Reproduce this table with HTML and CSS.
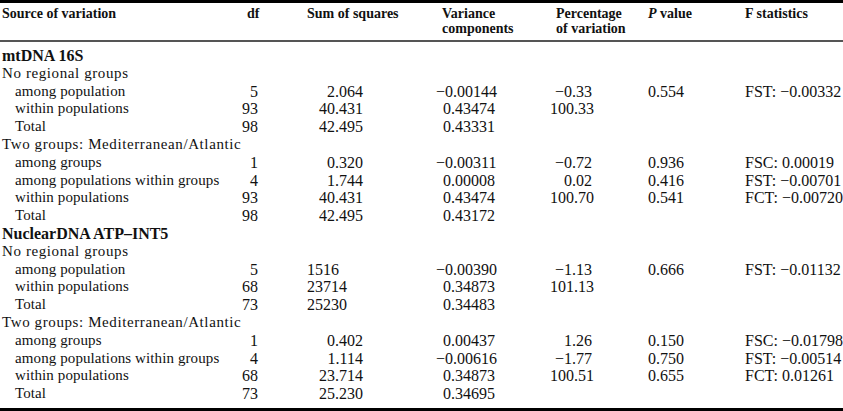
FILE: index.html
```html
<!DOCTYPE html>
<html lang="en">
<head>
<meta charset="utf-8">
<title>AMOVA table</title>
<link rel="stylesheet" href="styles.css">
</head>
<body>
<table class="amova">
  <colgroup>
    <col class="c-src"><col class="c-df"><col class="c-ss"><col class="c-vc"><col class="c-pct"><col class="c-p"><col class="c-f">
  </colgroup>
  <thead>
    <tr>
      <th class="src">Source of variation</th>
      <th>df</th>
      <th>Sum of squares</th>
      <th>Variance<br>components</th>
      <th>Percentage<br>of variation</th>
      <th><i>P</i> value</th>
      <th>F statistics</th>
    </tr>
  </thead>
  <tbody>
    <tr class="section"><td class="src" colspan="7">mtDNA 16S</td></tr>
    <tr><td class="src grp" colspan="7">No regional groups</td></tr>
    <tr><td class="src ind">among population</td><td class="r df">5</td><td class="r ss">2.064</td><td class="r vc">−0.00144</td><td class="r pct">−0.33</td><td class="lp">0.554</td><td class="lp">FST: −0.00332</td></tr>
    <tr><td class="src ind">within populations</td><td class="r df">93</td><td class="r ss">40.431</td><td class="r vc">0.43474</td><td class="r pct">100.33</td><td></td><td></td></tr>
    <tr><td class="src ind">Total</td><td class="r df">98</td><td class="r ss">42.495</td><td class="r vc">0.43331</td><td></td><td></td><td></td></tr>
    <tr><td class="src grp" colspan="7">Two groups: Mediterranean/Atlantic</td></tr>
    <tr><td class="src ind">among groups</td><td class="r df">1</td><td class="r ss">0.320</td><td class="r vc">−0.00311</td><td class="r pct">−0.72</td><td class="lp">0.936</td><td class="lp">FSC: 0.00019</td></tr>
    <tr><td class="src ind">among populations within groups</td><td class="r df">4</td><td class="r ss">1.744</td><td class="r vc">0.00008</td><td class="r pct">0.02</td><td class="lp">0.416</td><td class="lp">FST: −0.00701</td></tr>
    <tr><td class="src ind">within populations</td><td class="r df">93</td><td class="r ss">40.431</td><td class="r vc">0.43474</td><td class="r pct">100.70</td><td class="lp">0.541</td><td class="lp">FCT: −0.00720</td></tr>
    <tr><td class="src ind">Total</td><td class="r df">98</td><td class="r ss">42.495</td><td class="r vc">0.43172</td><td></td><td></td><td></td></tr>
    <tr class="section"><td class="src" colspan="7">NuclearDNA ATP–INT5</td></tr>
    <tr><td class="src grp" colspan="7">No regional groups</td></tr>
    <tr><td class="src ind">among population</td><td class="r df">5</td><td class="lp">1516</td><td class="r vc">−0.00390</td><td class="r pct">−1.13</td><td class="lp">0.666</td><td class="lp">FST: −0.01132</td></tr>
    <tr><td class="src ind">within populations</td><td class="r df">68</td><td class="lp">23714</td><td class="r vc">0.34873</td><td class="r pct">101.13</td><td></td><td></td></tr>
    <tr><td class="src ind">Total</td><td class="r df">73</td><td class="lp">25230</td><td class="r vc">0.34483</td><td></td><td></td><td></td></tr>
    <tr><td class="src grp" colspan="7">Two groups: Mediterranean/Atlantic</td></tr>
    <tr><td class="src ind">among groups</td><td class="r df">1</td><td class="r ss">0.402</td><td class="r vc">0.00437</td><td class="r pct">1.26</td><td class="lp">0.150</td><td class="lp">FSC: −0.01798</td></tr>
    <tr><td class="src ind">among populations within groups</td><td class="r df">4</td><td class="r ss">1.114</td><td class="r vc">−0.00616</td><td class="r pct">−1.77</td><td class="lp">0.750</td><td class="lp">FST: −0.00514</td></tr>
    <tr><td class="src ind">within populations</td><td class="r df">68</td><td class="r ss">23.714</td><td class="r vc">0.34873</td><td class="r pct">100.51</td><td class="lp">0.655</td><td class="lp">FCT: 0.01261</td></tr>
    <tr><td class="src ind">Total</td><td class="r df">73</td><td class="r ss">25.230</td><td class="r vc">0.34695</td><td></td><td></td><td></td></tr>
  </tbody>
</table>
</body>
</html>
```
FILE: styles.css
```css
html, body {
  margin: 0;
  padding: 0;
  background: #fff;
}

.amova {
  width: 843px;
  table-layout: fixed;
  border-collapse: separate;
  border-spacing: 0;
  border-top: 3px solid #000;
  border-bottom: 3px solid #000;
  font-family: "Liberation Serif", "Times New Roman", serif;
  font-size: 16px;
  color: #111;
}

.c-src { width: 241px; }
.c-df  { width: 60px; }
.c-ss  { width: 135px; }
.c-vc  { width: 114px; }
.c-pct { width: 92px; }
.c-p   { width: 97px; }
.c-f   { width: 104px; }

.amova th {
  font-size: 14px;
  font-weight: bold;
  line-height: 15px;
  text-align: left;
  vertical-align: top;
  white-space: nowrap;
  padding: 3px 0 4px 6px;
  border-bottom: 2px solid #555;
}

.amova th.src { padding-left: 2px; }

.amova td {
  height: 17.8px;
  line-height: 17.8px;
  padding: 0;
  white-space: nowrap;
  vertical-align: top;
}

.amova tbody tr:first-child td { padding-top: 5px; }
.amova tbody tr:last-child td { padding-bottom: 5px; }

.amova td.src { padding-left: 2px; font-size: 15px; }
.amova td.grp { letter-spacing: 0.6px; }
.amova td.ind { padding-left: 15px; letter-spacing: 0.1px; }
.amova .section td { font-size: 16px; font-weight: bold; }

.amova td.r { text-align: right; }
.amova td.df { padding-right: 43px; }
.amova td.ss { padding-right: 73px; }
.amova td.vc { padding-right: 55px; }
.amova td.pct { padding-right: 50px; }
.amova td.lp { padding-left: 6px; }
```
